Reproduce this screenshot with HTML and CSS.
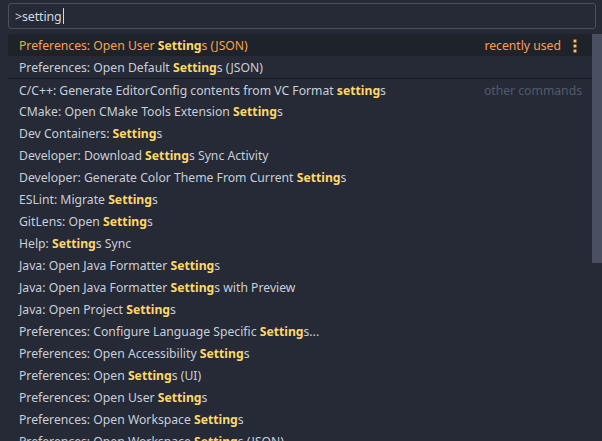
FILE: index.html
```html
<!DOCTYPE html>
<html>
<head>
<meta charset="utf-8">
<link rel="stylesheet" href="styles.css">
</head>
<body>
<div class="quick">
  <div class="input"><span class="val">&gt;setting</span><span class="caret"></span></div>
  <div class="list">
    <div class="row sel"><span class="label">Preferences: Open User <b>Setting</b>s (JSON)</span><span class="desc recent">recently used</span><svg class="kebab" width="4" height="14" viewBox="0 0 4 14"><rect x="0.5" y="0.5" width="3" height="3" fill="#f5a34d"/><rect x="1.2" y="1.2" width="1.6" height="1.6" fill="#ffd866"/><rect x="0.5" y="5.5" width="3" height="3" fill="#f5a34d"/><rect x="1.2" y="6.2" width="1.6" height="1.6" fill="#ffd866"/><rect x="0.5" y="10.5" width="3" height="3" fill="#f5a34d"/><rect x="1.2" y="11.2" width="1.6" height="1.6" fill="#ffd866"/></svg></div>
    <div class="row"><span class="label">Preferences: Open Default <b>Setting</b>s (JSON)</span></div>
    <div class="row sep"><span class="label">C/C++: Generate EditorConfig contents from VC Format <b>setting</b>s</span><span class="desc">other commands</span></div>
    <div class="row"><span class="label">CMake: Open CMake Tools Extension <b>Setting</b>s</span></div>
    <div class="row"><span class="label">Dev Containers: <b>Setting</b>s</span></div>
    <div class="row"><span class="label">Developer: Download <b>Setting</b>s Sync Activity</span></div>
    <div class="row"><span class="label">Developer: Generate Color Theme From Current <b>Setting</b>s</span></div>
    <div class="row"><span class="label">ESLint: Migrate <b>Setting</b>s</span></div>
    <div class="row"><span class="label">GitLens: Open <b>Setting</b>s</span></div>
    <div class="row"><span class="label">Help: <b>Setting</b>s Sync</span></div>
    <div class="row"><span class="label">Java: Open Java Formatter <b>Setting</b>s</span></div>
    <div class="row"><span class="label">Java: Open Java Formatter <b>Setting</b>s with Preview</span></div>
    <div class="row"><span class="label">Java: Open Project <b>Setting</b>s</span></div>
    <div class="row"><span class="label">Preferences: Configure Language Specific <b>Setting</b>s...</span></div>
    <div class="row"><span class="label">Preferences: Open Accessibility <b>Setting</b>s</span></div>
    <div class="row"><span class="label">Preferences: Open <b>Setting</b>s (UI)</span></div>
    <div class="row"><span class="label">Preferences: Open User <b>Setting</b>s</span></div>
    <div class="row"><span class="label">Preferences: Open Workspace <b>Setting</b>s</span></div>
    <div class="row"><span class="label">Preferences: Open Workspace <b>Setting</b>s (JSON)</span></div>
    <div class="scrollbar"></div>
  </div>
</div>
</body>
</html>
```
FILE: styles.css
```css
html, body {
  margin: 0;
  padding: 0;
  background: #252a36;
  height: 100%;
  overflow: hidden;
}
body {
  font-family: "Noto Sans", "Open Sans", sans-serif;
  font-size: 12.2px;
  color: #c9ced8;
}
.quick {
  padding: 3px 6px 0 8px;
  display: flex;
  flex-direction: column;
}
.input {
  height: 24px;
  border: 1px solid #4a4f5e;
  border-radius: 3px;
  background: #252a36;
  display: flex;
  align-items: center;
  padding-left: 6px;
  margin-bottom: 5px;
  color: #d4d8e0;
  font-size: 12.4px;
}
.val {
  letter-spacing: -0.1px;
}
.caret {
  width: 1px;
  height: 16px;
  background: #d4d8e0;
  margin-left: 1px;
}
.list {
  position: relative;
  margin-right: -6px;
}
.row {
  height: 22px;
  display: flex;
  align-items: center;
  padding-left: 11px;
  padding-right: 20px;
  padding-top: 1px;
  white-space: nowrap;
  box-sizing: border-box;
}
.row b {
  color: #ffd866;
  font-weight: 700;
}
.row.sel {
  background: #1e222b;
  border-radius: 3px;
  color: #f7a350;
  margin-right: 6px;
  padding-right: 19px;
}
.row.sep {
  border-top: 1px solid #191c24;
  height: 22px;
}
.label {
  flex: 1;
}
.desc {
  color: #545a69;
}
.desc.recent {
  color: #f7a350;
}
.kebab {
  margin-left: 12px;
}
.scrollbar {
  position: absolute;
  right: 0;
  top: 0;
  width: 10px;
  height: 229px;
  background: #4a5061;
}
```
